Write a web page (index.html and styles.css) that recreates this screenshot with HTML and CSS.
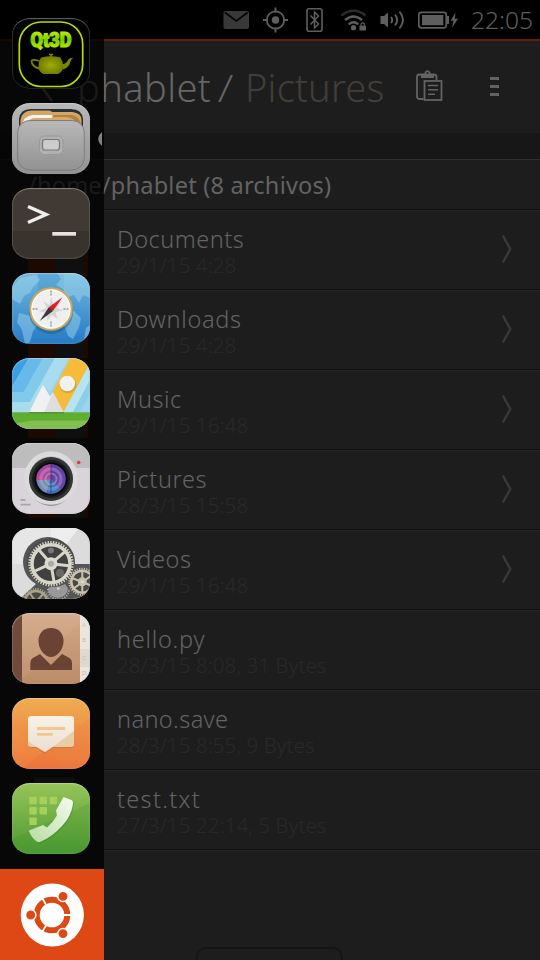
FILE: index.html
```html
<!DOCTYPE html>
<html lang="es">
<head>
<meta charset="utf-8">
<title>phablet</title>
<link rel="stylesheet" href="styles.css">
</head>
<body>
<div class="screen">
  <header class="status">
    <svg class="status-icons" width="240" height="39" viewBox="220 0 240 39" fill="none" stroke="#5e5e5e">
      <rect x="223.500" y="11" width="25.500" height="18" rx="2" fill="#383838" stroke="none"/>
      <path d="M225 12.500l11.300 8.500 11.300-8.500" stroke="#050505" stroke-width="1.600"/>
      <circle cx="275.500" cy="20" r="8.700" stroke-width="1.800"/>
      <circle cx="275.500" cy="20" r="3.700" fill="#5e5e5e" stroke="none"/>
      <path d="M275.500 7.500v5M275.500 27.500v5M263 20h5M283 20h5" stroke-width="1.800"/>
      <rect x="307" y="8.800" width="15" height="22.500" rx="2" stroke-width="1.600"/>
      <path d="M310.500 15.500l8 8.500-4 4v-16l4 4-8 8.500" stroke-width="1.500"/>
      <path d="M341.500 15.500q12-9.500 24 0" stroke="#2c2c2c" stroke-width="2.400"/>
      <path d="M345 20q8.500-7 17 0M348.700 24.300q5-4 9.500 0" stroke-width="2.300"/>
      <circle cx="353.500" cy="27.700" r="2.600" fill="#5e5e5e" stroke="none"/>
      <rect x="359.500" y="25.500" width="6.500" height="5" fill="#5e5e5e" stroke="none"/>
      <path d="M361 25.500v-1.500q1.700-2.300 3.400 0v1.500" stroke-width="1.200"/>
      <path d="M380.500 16h3.500l4-3.500v15l-4-3.500h-3.500z" fill="#5e5e5e" stroke="none"/>
      <path d="M391 17q2.400 3 0 6M395 14.500q4.400 5.500 0 11M399.500 11.700q7 8.300 0 16.600" stroke-width="1.900"/>
      <rect x="418.800" y="12.300" width="27.500" height="15.500" rx="2.500" stroke-width="1.700"/>
      <rect x="422" y="15" width="21.300" height="10.200" fill="#5e5e5e" stroke="none"/>
      <path d="M448 16v8" stroke-width="2"/>
      <path d="M455.500 12.500l-5 8.200h3l-1.500 7 6-9h-3.300z" fill="#5e5e5e" stroke="none"/>
    </svg>
    <span class="clock">22:05</span>
  </header>

  <div class="toolbar">
    <svg class="back" width="20" height="32" viewBox="0 0 20 32"><path d="M15 2L4 15l11 15" fill="none" stroke="#666" stroke-width="2.500"/></svg>
    <h1 class="title"><span class="t-cur">phablet</span><span class="t-slash">/</span><span class="t-next">Pictures</span></h1>
    <svg class="paste" width="28" height="33" viewBox="0 0 28 33" fill="none" stroke="#636363" stroke-width="1.800">
      <path d="M8.500 29H4.500q-2.500 0-2.500-2.500V7q0-2.500 2.500-2.500H19q2.500 0 2.500 2.500v3.500"/>
      <path d="M6 8V4h3q.5-3 3.500-4 3 1 3.500 4h3v4z" fill="#636363" stroke="none"/>
      <circle cx="12.500" cy="3" r="1" fill="#222" stroke="none"/>
      <rect x="9.500" y="11" width="17" height="19"/>
      <path d="M13 15.500h10M13 19.800h10M13 24.200h7" stroke-width="1.500"/>
    </svg>
    <div class="more"><i></i><i></i><i></i></div>
  </div>
  <div class="band"></div>
  <div class="path"><span>/home/phablet (8 archivos)</span></div>

  <main class="list">
    <div class="row"><span class="folder"></span><div class="text"><b class="n1">Documents</b><small>29/1/15 4:28</small></div><svg class="chev" viewBox="0 0 10 28"><path d="M.8 .5L8.300 14 .8 27.500"/></svg></div>
    <div class="row"><span class="folder"></span><div class="text"><b class="n2">Downloads</b><small>29/1/15 4:28</small></div><svg class="chev" viewBox="0 0 10 28"><path d="M.8 .5L8.300 14 .8 27.500"/></svg></div>
    <div class="row"><span class="folder"></span><div class="text"><b class="n3">Music</b><small>29/1/15 16:48</small></div><svg class="chev" viewBox="0 0 10 28"><path d="M.8 .5L8.300 14 .8 27.500"/></svg></div>
    <div class="row"><span class="folder"></span><div class="text"><b class="n4">Pictures</b><small>28/3/15 15:58</small></div><svg class="chev" viewBox="0 0 10 28"><path d="M.8 .5L8.300 14 .8 27.500"/></svg></div>
    <div class="row"><span class="folder"></span><div class="text"><b class="n5">Videos</b><small>29/1/15 16:48</small></div><svg class="chev" viewBox="0 0 10 28"><path d="M.8 .5L8.300 14 .8 27.500"/></svg></div>
    <div class="row"><span class="file"></span><div class="text"><b class="n6">hello.py</b><small>28/3/15 8:08, 31 Bytes</small></div></div>
    <div class="row"><span class="file"></span><div class="text"><b class="n7">nano.save</b><small>28/3/15 8:55, 9 Bytes</small></div></div>
    <div class="row"><span class="file"></span><div class="text"><b class="n8">test.txt</b><small>27/3/15 22:14, 5 Bytes</small></div></div>
  </main>
  <div class="footer"><div class="handle"></div></div>

  <nav class="launcher">
    <div class="apps">
      <div class="app"><svg viewBox="0 0 78 71">
        <defs>
          <linearGradient id="lime" x2="0" y2="1"><stop offset="0" stop-color="#e8f70a"/><stop offset=".5" stop-color="#79d000"/><stop offset="1" stop-color="#d0f000"/></linearGradient>
          <radialGradient id="pot"><stop offset="0" stop-color="#9fad00"/><stop offset="1" stop-color="#737e00"/></radialGradient>
        </defs>
        <rect width="78" height="71" fill="#030303"/>
        <rect x="7.300" y="4" width="63.400" height="64.500" rx="22" fill="#000" stroke="#b9dc00" stroke-width="1.700"/>
        <text x="18.500" y="28.500" textLength="41" lengthAdjust="spacingAndGlyphs" class="qt" fill="url(#lime)" stroke="url(#lime)" stroke-width="1.200">Qt3D</text>
        <path d="M29 39.500q10-2.500 19.500 0 2.500 3.500 2.500 9 0 5.500-5 7.500H31.500q-5-2-5-7.500 0-5.500 2.500-9z" fill="url(#pot)"/>
        <path d="M27.500 43q-8-2.500-8 .5 1 5.500 8 7" fill="none" stroke="#737e00" stroke-width="1.800"/>
        <path d="M50 46.500q4.500-1 6-4.500.8-2 5.500-2.300-2.700 1.300-3.200 4Q57 50 50.500 51.500z" fill="#7c8700"/>
        <path d="M37 36.500h4M39 37v2" stroke="#7c8700" stroke-width="1.500"/>
      </svg></div>

      <div class="app"><svg viewBox="0 0 78 71">
        <defs><linearGradient id="silver" x2="0" y2="1"><stop offset="0" stop-color="#b8b8b8"/><stop offset="1" stop-color="#929292"/></linearGradient></defs>
        <rect width="78" height="71" fill="url(#silver)"/>
        <path d="M7 24v-8q1-10 12-10h40q11 0 12 10v8z" fill="#27313a"/>
        <path d="M8.500 24v-7q1-9 11-9.500h18l3 1.500h20q9 1 9 8v7z" fill="#d5a562"/>
        <path d="M42 12h17q9 1 10 10l-6-4q-3-4-10-4H40z" fill="#b28243"/>
        <path d="M10.500 24q0-11 10-12h19q2 1 0 3H24q-9 1-11 9z" fill="#f4f4f4"/>
        <path d="M13 24q2-9 11-9h29q9 1 11 9z" fill="#d6a96b"/>
        <rect x="5.700" y="17.500" width="66.600" height="49.500" rx="12" fill="url(#silver)" stroke="#7d7d7d" stroke-width="1"/>
        <rect x="27.500" y="33" width="23.500" height="18.500" rx="5" fill="#b1b1b1" stroke="#999" stroke-width="1"/>
        <rect x="30.500" y="36.500" width="17" height="10.500" rx="2.500" fill="#ccc" stroke="#777" stroke-width="1.200"/>
      </svg></div>

      <div class="app"><svg viewBox="0 0 78 71">
        <rect width="78" height="71" fill="#413a34"/><rect y="43" width="78" height="28" fill="#39332d"/>
        <path d="M16 18.500L34 26.500 16 34.500" fill="none" stroke="#eee" stroke-width="3.500"/>
        <rect x="40.300" y="44" width="23.700" height="3.700" fill="#e8dfdf"/>
      </svg></div>

      <div class="app"><svg viewBox="0 0 78 71">
        <defs><linearGradient id="sea" x2="0" y2="1"><stop offset="0" stop-color="#70b9dd"/><stop offset="1" stop-color="#267bc6"/></linearGradient></defs>
        <rect width="78" height="71" fill="url(#sea)"/>
        <path d="M26 0h26v71H26z" fill="#2e80c0" opacity=".25"/>
        <path d="M0 14l8-9 16-3 4 5-7 7-3 6-6 3-4 8-8-5zM7 40l12 3 7 9-5 6-3 11-5 2-3-14-5-8zM45 0h33v25l-7-3-4 8-5-8-8 3-3-9-7-4 5-6zM52 40l10-2 7 7-2 9-6 12-5-3-4-12zM74 55l4-3v10l-6 4z" fill="#a6daf0" opacity=".45"/>
        <ellipse cx="39" cy="39" rx="22" ry="22" fill="#145383" opacity=".4"/>
        <circle cx="39" cy="36" r="20.700" fill="#efefef" stroke="#d2a957" stroke-width="2"/>
        <circle cx="39" cy="36" r="19" fill="none" stroke="#fff"/>
        <path d="M39 24l2.500 8 7-3-4 6 7 2-8 2 2 7-6-4-4 6-1-8-8-2 8-3-3-7 6 4z" fill="#d6d6d6"/>
        <path d="M39 17.500v6M39 48.500v6M20.500 36h6M51.500 36h6" stroke="#999" stroke-width="1.400" stroke-dasharray="2 1"/>
        <path d="M50.500 24.300L41 38l-4-4z" fill="#dd2030"/><path d="M27.700 48L37 34l4 4z" fill="#383838"/>
        <circle cx="39" cy="36" r="1.500" fill="#a22"/>
      </svg></div>

      <div class="app"><svg viewBox="0 0 78 71">
        <rect width="78" height="71" fill="#9bd4ec"/>
        <path d="M0 0h17L0 29z" fill="#3aa0e4"/><path d="M17 0h14L12 34H0v-5z" fill="#67b9e9"/><path d="M31 0h12L18 44H0V34h12z" fill="#82cae9"/>
        <path d="M43 0h14L38 34l-7-7L17 54H0V44h18z" fill="#a9dcee"/>
        <path d="M78 5v17L61 54H51z" fill="#b6e4f1"/><path d="M78 22v14L68 54h-7z" fill="#8ccfe9"/>
        <path d="M58 0h20v5L51.300 54.300 40.700 34z" fill="#f5bc3a"/>
        <path d="M17 54.500L31 26.500l7 12 3-4 10.500 20z" fill="#f1f1f1"/><path d="M41 34.300l-9 20h19.500z" fill="#dedede"/>
        <rect y="54.300" width="78" height="17" fill="#5fae2f"/><path d="M0 66l20-3.500h58V71H0z" fill="#83bf50"/>
        <path d="M17 54.800h35" stroke="#477f29" stroke-width="1"/>
        <circle cx="56" cy="26.700" r="8.500" fill="#a87618" opacity=".35"/><circle cx="55.300" cy="25.500" r="7.800" fill="#f1f1f1"/>
      </svg></div>

      <div class="app"><svg viewBox="0 0 78 71">
        <rect width="78" height="71" fill="#d9d4d9"/><rect width="78" height="25" fill="#bdbdbd"/>
        <ellipse cx="39" cy="41" rx="22" ry="22" fill="#8e8e8e"/>
        <circle cx="39" cy="35" r="24.300" fill="none" stroke="#dddadd" stroke-width="5"/>
        <circle cx="39" cy="36" r="22" fill="#343634"/><circle cx="39" cy="36" r="19" fill="#1a1b1b"/><circle cx="39" cy="36" r="16.500" fill="#050508"/>
        <circle cx="39" cy="36" r="14.800" fill="#6645a4"/>
        <path d="M39 36L25 31q5-9 14-10z" fill="#aa479e"/><path d="M39 36V21q9 1 13 9z" fill="#6040a0"/><path d="M39 36l-14.500 1q2 10 10 13z" fill="#6f8fae"/><path d="M39 36l-4.500 14q9 2 14-4z" fill="#3775bd"/><path d="M39 36l-14-5-.5 6z" fill="#ca4291"/>
        <circle cx="39" cy="36" r="10" fill="none" stroke="#d5bedf" stroke-opacity=".32" stroke-width="3"/><circle cx="39" cy="36" r="5.500" fill="none" stroke="#d5bedf" stroke-opacity=".4" stroke-width="2"/>
        <path d="M39 36V21M39 36v14" stroke="#2f1746" stroke-opacity=".35" stroke-width="1.500"/>
        <circle cx="66.700" cy="19.500" r="1.800" fill="#cf4045"/>
        <path d="M8.500 57h5M8.500 61.700h10" stroke="#aaa5aa" stroke-width="1.800"/>
      </svg></div>

      <div class="app"><svg viewBox="0 0 78 71">
        <rect width="78" height="71" fill="#dcdcdc"/><path d="M0 0h39v36H0z" fill="#e6e6e6"/><path d="M39 0h28L39 36z" fill="#ededed"/>
        <path d="M8 71L24 56a25 25 0 1 1 37-20h17v35z" fill="#555"/>
        <circle cx="39" cy="34.500" r="24" fill="#4b4b4b"/>
        <circle cx="39" cy="35.700" r="19" fill="#414141" stroke="#d8d6c9" stroke-width="3.500"/>
        <circle cx="39" cy="35.700" r="21.500" fill="none" stroke="#d8d6c9" stroke-width="2.500" stroke-dasharray="1.400 1.300"/>
        <circle cx="39" cy="22.500" r="3" fill="#777"/><circle cx="48" cy="45" r="4" fill="#686868"/>
        <path d="M39 35.700L27 22M39 35.700l14-12M39 35.700l18 2M39 35.700l3 18M39 35.700L23 43" stroke="#d8d6c9" stroke-width="3"/>
        <circle cx="39" cy="35.700" r="6.500" fill="#dcdace"/><circle cx="39" cy="35.700" r="3" fill="#aaa"/>
        <path d="M36 60a10 10 0 0 0 20 0l-3-4q-5 3-14 3z" fill="#999"/><path d="M36 61a10.500 10.500 0 0 0 21 0" fill="none" stroke="#aaa" stroke-width="2" stroke-dasharray="1.300 1.200"/><circle cx="46.300" cy="60.500" r="1.500" fill="#ccc"/>
        <g stroke="#c9c2ad" fill="none"><circle cx="70.300" cy="53.700" r="11" stroke-width="2.500" fill="#484848"/><circle cx="70.300" cy="53.700" r="13" stroke-width="2" stroke-dasharray="1.200 1.200"/><path d="M70.300 43v21M60 50l20 8M61 61l19-14" stroke-width="2"/><circle cx="70.300" cy="53.700" r="3" fill="#ddd9cc" stroke-width="3"/></g>
        <g stroke="#aaa289" fill="none"><circle cx="24" cy="74" r="11" stroke-width="2.500" fill="#484848"/><circle cx="24" cy="74" r="13" stroke-width="2" stroke-dasharray="1.200 1.200"/><path d="M24 74l-7-10M24 74l8-9" stroke-width="2"/></g>
      </svg></div>

      <div class="app"><svg viewBox="0 0 78 71">
        <defs><linearGradient id="tan" x2="0" y2="1"><stop offset="0" stop-color="#d3aa89"/><stop offset="1" stop-color="#bb8b67"/></linearGradient></defs>
        <rect width="78" height="71" fill="url(#tan)"/><path d="M68 9L10 67V0h58z" fill="#fff" opacity=".05"/><rect width="10" height="71" fill="#704a3b"/>
        <rect x="68" width="10" height="71" fill="#eae6df"/><path d="M68 36h10v18H68z" fill="#dedad1"/>
        <g class="tabs" fill="#c5c0b6"><text x="70" y="14">A</text><text x="70" y="29">B</text><text x="70" y="47">C</text><text x="70" y="62">D</text></g>
        <path d="M39 15c8 0 13 6 12.500 14C51 37 45 44 39 44S27 37 26.500 29C26 21 31 15 39 15z" fill="#6b4334"/>
        <path d="M28 41l11 11 11-11 7.500 4q2.500 1.500 2.500 5v7H18.300v-7q0-3.500 2.500-5z" fill="#6b4334"/>
      </svg></div>

      <div class="app"><svg viewBox="0 0 78 71">
        <defs><linearGradient id="sun" x2="0" y2="1"><stop offset="0" stop-color="#efad50"/><stop offset="1" stop-color="#ee723b"/></linearGradient><linearGradient id="bub" x2="0" y2="1"><stop offset="0" stop-color="#f8f2e9"/><stop offset="1" stop-color="#eaded0"/></linearGradient></defs>
        <rect width="78" height="71" fill="url(#sun)"/><path d="M0 31l31 23L10 71H0z" fill="#f6a14a" opacity=".2"/><path d="M78 20L33 54l18 17h27z" fill="#e9833e" opacity=".3"/>
        <path d="M20 20h38q4 0 4 4v22q0 4-4 4H41l-8 6-9-6h-4q-4 0-4-4V24q0-4 4-4z" fill="#a95b22" opacity=".3"/>
        <path d="M19 18h40q3 0 3 3v25q0 2.700-3 2.700H41l-8 5.600-9-5.600h-5q-3 0-3-2.700V21q0-3 3-3z" fill="url(#bub)"/>
        <path d="M62 33v13q0 2.700-3 2.700H41z" fill="#e9cda6"/><path d="M16 43l8 5.700h-5q-3 0-3-2.700z" fill="#e9cda6"/>
        <path d="M25 30.500h28M25 36.400h15.700" stroke="#f0c88f" stroke-width="2.800"/>
      </svg></div>

      <div class="app"><svg viewBox="0 0 78 71">
        <defs><linearGradient id="leaf" x2="0" y2="1"><stop offset="0" stop-color="#98c458"/><stop offset="1" stop-color="#4b9932"/></linearGradient><linearGradient id="tel" x1="1" x2="0" y2="1"><stop offset="0" stop-color="#f5fbf1"/><stop offset="1" stop-color="#b8dca0"/></linearGradient></defs>
        <rect width="78" height="71" fill="url(#leaf)"/><path d="M0 56L78 20v51H0z" fill="#3c902a" opacity=".2"/>
        <g fill="#a5d05e"><rect x="17.300" y="13.700" width="7.500" height="7.500" rx="1"/><rect x="27.500" y="13.700" width="7.500" height="7.500" rx="1"/><rect x="37.700" y="13.700" width="7.500" height="7.500" rx="1"/><rect x="17.300" y="24" width="7.500" height="7.500" rx="1"/><rect x="27.500" y="24" width="7.500" height="7.500" rx="1"/><rect x="17.300" y="34.500" width="7.500" height="7.500" rx="1"/></g>
        <path d="M51.500 14l8 3q2 1 1.500 4-2 13-11 22-10 11-21 15.500-3 1.500-5-.5-4-3-7-9.500l0-1 14-5.500 4 2.500q6-5 10-12l-1-5z" fill="#2f6f22" opacity=".3" transform="translate(1 1)"/>
        <path d="M51.500 14l8 3q2 1 1.500 4-2 13-11 22-10 11-21 15.500-3 1.500-5-.5-4-3-7-9.500l0-1 14-5.500 4 2.500q6-5 10-12l-1-5z" fill="url(#tel)"/>
      </svg></div>
    </div>
    <svg class="running" width="4" height="14" viewBox="0 0 4 14"><path d="M4 0Q-3.500 7 4 14z" fill="#808080"/></svg>
    <div class="home">
      <svg width="64" height="64" viewBox="0 0 64 64">
        <circle cx="32.300" cy="32" r="31.600" fill="#fff"/>
        <circle cx="32" cy="32" r="15.300" fill="none" stroke="#dd4814" stroke-width="6"/>
        <path d="M43 32h9M26 21.500l-4.800-8M26 42.500l-4.800 8" stroke="#fff" stroke-width="1.800"/>
        <g fill="#dd4814" stroke="#fff" stroke-width="1.500"><circle cx="10.700" cy="32" r="5.200"/><circle cx="43" cy="13.400" r="5.200"/><circle cx="43" cy="50.600" r="5.200"/></g>
      </svg>
    </div>
  </nav>
</div>
</body>
</html>
```

FILE: styles.css
```css
* { box-sizing: border-box; }
body { margin: 0; background: #1d1d1d; font-family: "Noto Sans", "Open Sans", sans-serif; font-weight: 300; }
.screen { position: relative; width: 540px; height: 960px; overflow: hidden; background: #1d1d1d; display: flex; flex-direction: column; }
.screen > * { flex: none; }

.status { height: 41px; background: #000; border-bottom: 2px solid #611f08; display: flex; justify-content: flex-end; align-items: center; padding-right: 7px; }
.status-icons { margin-right: 11px; }
.clock { width: 62px; font-size: 24.5px; line-height: 39px; color: #5e5e5e; white-space: nowrap; letter-spacing: 0; }

.toolbar { height: 92px; display: flex; align-items: center; padding-left: 37px; }
.back { margin-right: 20px; }
.title { margin: 0; width: 338px; display: flex; font-size: 38px; line-height: 50px; font-weight: 300; color: #666; white-space: nowrap; }
.t-cur { width: 142px; letter-spacing: .4px; }
.t-slash { width: 26px; transform: skewX(-5deg); }
.t-next { color: #423e3a; letter-spacing: .2px; }
.paste { margin-top: -2px; }
.more { margin-left: 47px; display: flex; flex-direction: column; gap: 5px; margin-top: -2px; }
.more i { width: 9px; height: 3px; background: #636363; }
.band { height: 27px; background: #171717; border-bottom: 1px solid #303030; }
.path { height: 50px; padding: 1px 0 0 28px; border-bottom: 1px solid #111; font-size: 23.5px; line-height: 48px; font-weight: 400; color: #636363; white-space: nowrap; letter-spacing: .23px; }

.row { height: 80px; display: flex; align-items: flex-start; padding-left: 28px; border-top: 1px solid #242424; border-bottom: 1px solid #121212; }
.folder, .file { width: 60px; height: 60px; margin: 7px 29px 0 0; border-radius: 2px; flex: none; }
.folder { background: linear-gradient(90deg, #6b2a0a 28px, #3b3b3b 28px, #3b3b3b 56px, #6b2a0a 56px); }
.file { background: linear-gradient(90deg, transparent 6px, #3d3d42 6px, #3d3d42 46px, transparent 46px); }
.text { width: 385px; padding-top: 14px; white-space: nowrap; }
.text b, .text small { display: block; font-weight: 300; }
.text b { font-size: 23.5px; line-height: 28px; color: #646464; }
.text small { font-size: 20.5px; line-height: 24px; color: #292929; letter-spacing: .1px; }
.n1 { letter-spacing: .5px; }
.n2 { letter-spacing: .7px; }
.n3 { letter-spacing: .5px; }
.n4 { letter-spacing: .6px; }
.n5 { letter-spacing: .6px; }
.n6 { letter-spacing: .75px; }
.n7 { letter-spacing: .4px; }
.n8 { letter-spacing: 1.3px; }
.chev { width: 10px; height: 28px; margin-top: 24px; }
.chev path { fill: none; stroke: #393939; stroke-width: 2.4; }

.footer { height: 110px; border-top: 1px solid #242424; padding: 96px 0 0 196px; }
.handle { width: 147px; height: 30px; border: 2px solid #151515; border-radius: 10px; }

.launcher { position: absolute; left: 0; top: 0; width: 104px; height: 960px; background: rgba(0, 0, 0, .74); display: flex; flex-direction: column; }
.apps { height: 869px; padding: 18px 12px 0; display: flex; flex-direction: column; gap: 14px; }
.app { width: 78px; height: 71px; border-radius: 18px / 16px; overflow: hidden; position: relative; flex: none; }
.app::after { content: ""; position: absolute; inset: 0; border-radius: inherit; box-shadow: inset 0 1px 1px rgba(255, 255, 255, .3), inset 0 0 1px 1px rgba(180, 180, 180, .2); }
.app svg { display: block; width: 78px; height: 71px; }
.qt { font: 900 20px "Roboto", "Liberation Sans", sans-serif; }
.tabs { font: 6px "Liberation Sans", sans-serif; }
.running { position: absolute; left: 98px; top: 132px; }
.home { height: 91px; background: #dd4814; display: flex; align-items: center; justify-content: center; }
```
